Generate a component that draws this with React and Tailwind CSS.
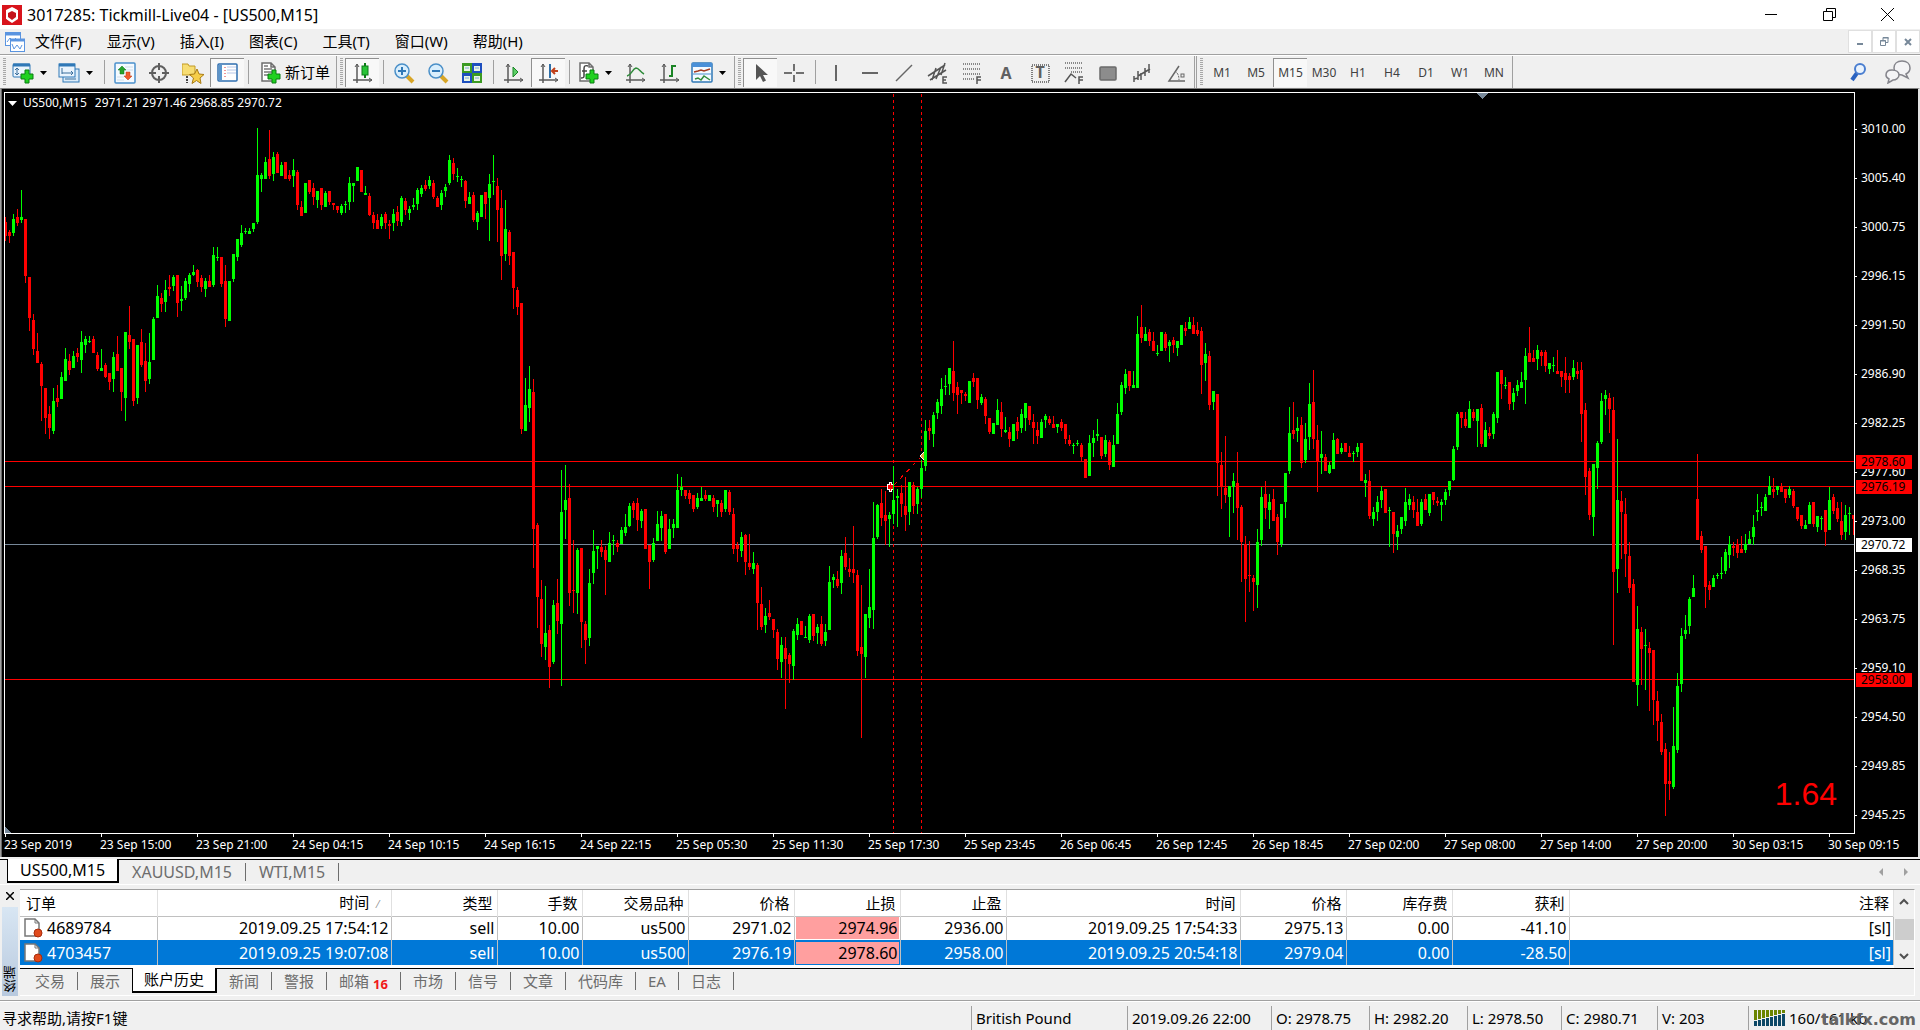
import React from "react";

const MENUS = ["文件(F)", "显示(V)", "插入(I)", "图表(C)", "工具(T)", "窗口(W)", "帮助(H)"];
const TIMEFRAMES = ["M1", "M5", "M15", "M30", "H1", "H4", "D1", "W1", "MN"];
const CHART_TABS = ["US500,M15", "XAUUSD,M15", "WTI,M15"];
const TERMINAL_TABS = [
  "交易", "展示", "账户历史", "新闻", "警报", "邮箱", "市场", "信号", "文章", "代码库", "EA", "日志",
];

const PRICES = [
  "3010.00", "3005.40", "3000.75", "2996.15", "2991.50", "2986.90", "2982.25", "2977.60",
  "2973.00", "2968.35", "2963.75", "2959.10", "2954.50", "2949.85", "2945.25",
];

const TIMES = [
  "23 Sep 2019", "23 Sep 15:00", "23 Sep 21:00", "24 Sep 04:15", "24 Sep 10:15",
  "24 Sep 16:15", "24 Sep 22:15", "25 Sep 05:30", "25 Sep 11:30", "25 Sep 17:30",
  "25 Sep 23:45", "26 Sep 06:45", "26 Sep 12:45", "26 Sep 18:45", "27 Sep 02:00",
  "27 Sep 08:00", "27 Sep 14:00", "27 Sep 20:00", "30 Sep 03:15", "30 Sep 09:15",
];

const LEVELS = [
  { y: 461, price: "2978.60", color: "#ff0000" },
  { y: 486, price: "2976.19", color: "#ff0000" },
  { y: 544, price: "2970.72", color: "#778899" },
  { y: 679, price: "2958.00", color: "#ff0000" },
];

const ORDERS = [
  ["4689784", "2019.09.25 17:54:12", "sell", "10.00", "us500", "2971.02", "2974.96", "2936.00", "2019.09.25 17:54:33", "2975.13", "0.00", "-41.10", "[sl]"],
  ["4703457", "2019.09.25 19:07:08", "sell", "10.00", "us500", "2976.19", "2978.60", "2958.00", "2019.09.25 20:54:18", "2979.04", "0.00", "-28.50", "[sl]"],
];
const COLUMNS = [
  ["订单", "w-[137px]"],
  ["时间", "w-[234px]"],
  ["类型", "w-[106px]"],
  ["手数", "w-[85px]"],
  ["交易品种", "w-[106px]"],
  ["价格", "w-[106px]"],
  ["止损", "w-[106px]"],
  ["止盈", "w-[106px]"],
  ["时间", "w-[234px]"],
  ["价格", "w-[106px]"],
  ["库存费", "w-[106px]"],
  ["获利", "w-[117px]"],
  ["注释", ""],
];

// direction, high, body top, body bottom, low
const BARS = `
d217,222,236,241 d230,232,236,243 u214,219,233,236 d209,217,223,226 u190,217,220,223
d219,219,276,283 d277,277,318,331 d314,320,349,355 d333,351,363,363 d362,364,386,421
d388,388,418,434 d406,414,428,439 u388,401,431,434 d385,398,402,407 u372,377,399,399
u348,359,381,381 d354,361,370,375 u351,356,368,368 d348,353,357,362 u331,342,360,373
u336,339,345,353 u336,341,342,343 d336,339,353,353 d352,355,369,371 u349,368,371,371
d363,365,377,378 d373,373,382,390 u352,357,379,392 d336,354,371,371 d368,368,392,411
u332,332,398,421 d306,335,342,349 d339,339,401,406 u345,345,398,404 d329,342,365,367
d343,361,381,392 u333,362,379,384 u317,319,360,360 u285,296,318,318 d293,298,304,312
u280,290,302,312 d275,287,289,296 u275,277,286,291 d275,275,303,317 u286,299,301,311
u278,281,298,300 u273,275,284,292 u265,272,275,276 d269,270,282,287 d275,278,287,292
u278,281,289,297 d275,281,287,287 u247,255,285,287 u247,257,258,261 d257,257,284,287
d265,281,319,327 u281,281,321,321 u254,254,279,282 u239,239,257,261 u225,233,245,247
u228,231,232,234 u228,231,234,234 u223,223,229,232 u128,175,222,224 u173,175,179,192
u157,162,179,179 d130,159,176,179 u152,157,174,181 d152,154,173,173 u162,165,176,176
d162,162,179,179 d170,175,179,181 u159,170,176,187 d170,172,205,210 d201,207,216,216
u183,183,213,213 d180,180,192,194 d183,188,197,205 u191,191,200,208 d188,188,205,210
u191,193,207,207 d191,191,202,205 d203,203,205,210 d206,206,210,213 u204,206,213,215
u201,204,205,213 u177,183,202,210 u183,183,186,202 u167,167,181,181 d170,170,192,192
u186,193,195,195 d193,196,215,216 d212,215,223,229 d214,220,229,229 u214,217,226,229
d212,214,223,229 d220,224,226,239 u209,214,223,231 d206,212,221,226 u196,198,222,226
d198,201,210,215 u206,209,213,220 u198,205,207,210 u188,190,204,210 u185,188,194,197
d180,185,189,191 u176,180,186,189 d180,183,197,199 d196,198,207,207 u190,193,205,210
u184,187,191,197 u155,160,183,185 d158,163,174,180 u168,176,177,182 u176,179,180,187
d180,181,201,208 u192,197,204,204 d192,195,220,222 u211,213,222,230 u195,195,217,217
d192,192,204,219 u174,184,198,241 u155,181,182,195 d178,186,210,242 d190,208,256,280
u200,229,254,261 d230,232,256,265 d252,252,288,309 d287,290,307,315 d303,303,429,434
u378,405,431,431 u366,389,408,422 d379,392,529,568 d523,525,597,628 d580,599,644,657
u586,633,647,660 d625,630,667,688 u600,605,662,664 d579,603,621,634 u470,512,624,686
u465,500,510,539 d484,498,593,606 d540,590,591,613 u548,550,593,614 d548,548,622,648
d621,624,640,664 u569,583,638,646 u530,551,573,584 u546,546,549,569 d540,547,552,557
d546,550,560,595 u532,543,562,562 u535,540,541,555 d540,543,547,552 u527,530,544,544
u514,527,533,536 u503,506,526,527 d501,503,510,518 d498,503,520,531 u509,511,521,528
d509,509,549,549 d545,545,562,589 u538,543,560,562 u511,524,541,541 u511,516,528,541
d514,514,552,554 u519,529,549,549 u519,524,528,538 u474,490,528,528 u477,487,490,496
d490,490,496,499 d490,493,499,504 d495,495,509,512 u493,498,507,509 u487,498,501,501
d490,495,499,501 u495,495,501,501 d495,498,507,512 u500,500,504,517 d500,503,512,517
u490,490,509,512 d490,492,512,515 d508,514,549,554 d542,545,549,562 u532,537,551,557
d534,535,562,575 d534,563,567,570 u552,563,569,574 d563,565,603,630 d587,604,627,630
u608,616,625,633 d600,613,617,620 d619,619,630,638 d629,632,659,670 u637,645,662,678
d637,648,659,709 d653,655,664,683 u629,631,666,680 u618,624,635,640 d621,621,635,635
u626,637,638,638 u614,616,640,643 d614,614,636,641 u624,627,633,644 d616,624,644,646
u624,632,641,646 u566,582,630,630 u574,577,580,588 d571,579,586,588 u550,556,583,594
d537,553,567,570 d558,569,572,577 d526,569,573,583 d570,575,651,656 d585,647,654,738
u614,614,657,678 u569,607,618,628 u502,538,610,629 u504,505,537,539 d489,503,518,526
d491,515,521,545 u512,515,519,547 u466,500,514,524 u489,496,498,527 d485,493,504,517
d477,506,515,531 u482,482,512,525 d482,485,506,514 u487,489,504,514 u460,468,489,498
u420,431,466,471 d420,428,431,440 u412,415,434,447 u399,402,413,419 u378,389,406,414
u375,386,387,395 u368,368,384,395 d341,371,393,401 d382,387,395,414 d390,390,393,404
d392,394,396,401 u381,381,403,403 d373,378,382,387 d378,378,400,409 u394,397,403,405
d397,399,416,424 d418,418,432,434 u423,423,434,434 u399,410,425,425 d402,412,429,437
u417,430,432,433 d427,432,439,447 u424,424,441,441 d417,422,431,439 u409,414,428,433
u403,403,418,431 d406,406,420,425 d414,422,428,444 d422,430,436,444 u419,422,438,438
u414,416,420,428 d416,419,423,425 d416,424,428,428 u424,424,427,433 d419,422,428,431
d424,424,439,444 d435,440,444,446 u443,445,446,454 u440,443,444,446 d443,445,457,461
d459,459,478,478 u435,443,476,476 u430,438,443,457 u419,434,436,441 d437,437,456,459
u435,440,454,457 d440,442,465,470 u435,445,467,467 u403,414,444,444 u382,385,412,415
u369,374,388,394 d371,371,386,391 u371,385,388,388 u316,334,388,388 d305,327,338,343
u327,334,341,341 d329,332,341,346 d332,341,351,351 u345,353,354,356 u332,332,351,351
d332,334,348,351 u340,342,346,362 d337,340,345,353 u341,341,348,356 u325,325,345,345
d322,328,331,336 u317,322,329,329 d317,325,334,334 d322,330,334,336 d327,331,365,394
u343,354,363,381 d351,356,405,410 u391,391,402,410 d394,394,463,496 d452,465,486,509
d436,488,495,503 u486,486,497,537 u473,481,487,513 d452,483,508,540 d505,507,542,582
d536,544,579,622 d541,575,576,592 d575,578,582,611 u529,542,585,608 u487,497,540,546
d481,494,508,519 u494,502,510,529 d489,499,521,521 d514,517,542,555 u504,504,544,547
u473,473,502,518 u407,433,471,474 d402,430,434,439 u417,428,431,442 d417,425,463,468
u423,439,460,463 u383,404,437,450 d370,402,439,449 d425,440,461,492 u431,454,458,474
d454,457,471,471 u462,465,473,474 u433,440,469,469 d438,439,454,454 u443,448,452,454
d443,443,452,452 d446,453,457,457 u451,453,454,462 u443,447,452,457 d443,443,481,481
u474,480,483,497 d470,481,516,519 u507,512,519,526 u496,502,512,521 u486,491,500,508
d489,489,513,513 u507,510,511,547 d512,512,534,553 u525,531,537,550 u517,517,529,534
u488,502,521,526 u494,499,505,510 d496,502,510,518 d499,512,526,526 u499,502,524,526
d494,499,510,510 u494,494,513,516 d492,492,500,505 d497,501,503,506 u499,502,505,521
u489,492,500,505 u481,481,490,496 u446,449,480,481 u412,414,447,450 d412,412,418,428
d412,419,426,428 u401,409,428,428 d409,412,418,421 u409,409,421,447 d404,408,444,447
u422,430,447,447 d427,433,436,439 u412,414,434,439 u372,372,418,423 d370,370,384,399
u377,385,386,389 d382,382,404,410 u388,393,402,410 u380,385,391,396 u372,382,388,388
u348,356,380,404 d327,353,362,362 d350,358,362,362 u345,350,359,370 d350,352,356,366
d350,352,366,372 u363,363,369,374 u357,365,366,372 d350,371,374,374 d371,371,377,387
d357,373,380,393 d373,376,380,393 u360,368,377,380 d362,371,374,379 d362,370,414,442
d403,410,477,495 d468,471,515,520 u464,464,517,536 u441,443,468,489 u393,401,442,444
u390,395,399,415 d393,398,409,433 d397,410,572,645 u439,500,569,593 d491,501,512,559
d498,514,554,577 d542,556,588,593 d579,584,682,682 u606,629,685,706 d627,632,649,685
u629,645,646,690 d642,648,653,711 d650,650,700,725 d691,701,721,741 d714,722,752,755
d743,749,784,816 d752,781,784,800 u707,746,787,789 u673,686,750,753 u628,636,684,692
u615,630,634,639 u597,599,626,634 u575,588,597,597 d454,499,540,540 d531,536,550,553
d546,546,587,608 d581,585,590,600 u575,578,587,587 u573,575,576,579 u557,573,574,579
u549,552,571,574 u536,544,555,568 d542,546,548,556 d539,544,553,558 d536,549,553,553
u534,544,550,553 u531,539,544,544 u515,527,537,545 u494,510,512,521 u502,507,508,516
u494,497,511,511 u476,486,495,495 d478,489,492,498 u486,486,490,495 d483,486,492,492
d489,489,498,503 u486,489,495,498 d489,491,506,508 d507,507,519,521 d515,515,526,529
u520,525,529,529 u502,505,524,524 d502,502,524,527 u516,516,527,532 u516,518,519,530
d510,510,532,546 u487,500,530,530 d494,497,511,514 d502,508,519,522 d502,521,535,540
u505,515,532,540 u507,513,514,535 d515,515,519,535
`
  .trim()
  .split(/\s+/)
  .map((token) => {
    const [high, top, bottom, low] = token.slice(1).split(",").map(Number);
    return { up: token[0] === "u", high, top, bottom, low };
  });

const PLOT_X = 5;
const PLOT_Y = 93;

function Icon({ children, size = 22 }) {
  return (
    <svg width={size} height={size} viewBox="0 0 22 22" fill="none" aria-hidden="true" className="shrink-0">
      {children}
    </svg>
  );
}

const Plus = () => <path d="M13 8h4v4h4v5h-4v4h-4v-4H9v-5h4z" fill="#1fd11f" stroke="#0a7d12" />;

const Axes = () => (
  <g stroke="#5a5a5a">
    <path d="M5 2v19M1 18h19" strokeWidth="1.500" />
    <path d="M3 5l2-3 2 3M17 16l3 2-3 2" />
  </g>
);

const Page = () => <path d="M3 1h9l4 4v14H3z M12 1v4h4" fill="#fff" stroke="#6e6e6e" strokeWidth="1.500" />;

const ICONS = {
  newChart: (
    <>
      <rect x="1" y="2" width="17" height="13" rx="1" fill="#eaf4fd" stroke="#2f78b7" />
      <path d="M1 3h17" stroke="#2f78b7" strokeWidth="3" />
      <path d="M5 6v7M3 8l2-2 2 2M3 11l2 2 2-2" stroke="#3b6f9c" />
      <Plus />
    </>
  ),
  profiles: (
    <>
      <rect x="5" y="7" width="16" height="13" fill="#dcecf9" stroke="#2f78b7" />
      <rect x="1" y="2" width="16" height="13" fill="#eaf4fd" stroke="#2f78b7" />
      <path d="M1 3h16" stroke="#2f78b7" strokeWidth="3" />
      <path d="M4 6v6M4 11h11M13 9l2 2-2 2M7 17h11" stroke="#3b6f9c" />
    </>
  ),
  market: (
    <>
      <rect x="1" y="1" width="20" height="20" rx="1" fill="#f4faff" stroke="#4a90cc" strokeWidth="1.500" />
      <path d="M11 5h8M11 8h8M3 15h7M3 18h7" stroke="#cfdde8" />
      <path d="M8 4l4 4h-2v4H6V8H4z" fill="#25a32b" stroke="#127018" strokeWidth=".5" />
      <path d="M12 10h4v4h2l-4 4-4-4h2z" fill="#f1592a" stroke="#b8360f" strokeWidth=".5" />
    </>
  ),
  target: (
    <g stroke="#5f5f5f" strokeWidth="2">
      <circle cx="11" cy="11" r="7" />
      <path d="M11 1v7M11 14v7M1 11h7M14 11h7" />
    </g>
  ),
  favorites: (
    <>
      <path d="M0 2h6l1 2h6v9H0z" fill="#f7dd73" stroke="#c29a25" />
      <path d="M5 14v7" stroke="#444" strokeWidth="2" strokeDasharray="2 1" />
      <path d="M15 7l2 5 5 .5-4 3.500 1 5.500-4.500-3-4.500 3 1.500-5.500-4-3.500 5-.5z" fill="#f6ce4a" stroke="#a97c14" />
    </>
  ),
  navigator: (
    <>
      <rect x="1" y="2" width="19" height="17" rx="1" fill="#fff" stroke="#2f6fb0" strokeWidth="1.500" />
      <rect x="2" y="3" width="3" height="15" fill="#5a96cc" />
      <path d="M8 5v11" stroke="#e03030" strokeDasharray="1 2" />
      <path d="M10 5h9M10 8h9M10 11h9" stroke="#b8c8e8" />
    </>
  ),
  newOrder: (
    <>
      <Page />
      <path d="M5 7h8M5 10h8M5 13h5M5 4h4" stroke="#7a7a7a" strokeWidth="1.500" />
      <Plus />
    </>
  ),
  candles: (
    <>
      <Axes />
      <path d="M13 1v15" stroke="#0d7a18" strokeWidth="2" />
      <rect x="10" y="4" width="6" height="9" fill="#28c436" stroke="#0d7a18" />
    </>
  ),
  zoomIn: (
    <>
      <path d="M13 13l7 7" stroke="#d8a526" strokeWidth="4" />
      <circle cx="9" cy="9" r="7" fill="#d9eefc" stroke="#4a8fc8" strokeWidth="1.500" />
      <path d="M9 5v8M5 9h8" stroke="#2f78b7" strokeWidth="2" />
    </>
  ),
  zoomOut: (
    <>
      <path d="M13 13l7 7" stroke="#d8a526" strokeWidth="4" />
      <circle cx="9" cy="9" r="7" fill="#d9eefc" stroke="#4a8fc8" strokeWidth="1.500" />
      <path d="M5 9h8" stroke="#2f78b7" strokeWidth="2" />
    </>
  ),
  tile: (
    <>
      <rect x="1" y="1" width="10" height="10" fill="#3b9a22" />
      <rect x="11" y="1" width="10" height="10" fill="#1d4fbf" />
      <rect x="1" y="11" width="10" height="10" fill="#1d4fbf" />
      <rect x="11" y="11" width="10" height="10" fill="#3b9a22" />
      <path d="M3 4h6v5H3zM13 4h6v5h-6zM3 14h6v5H3zM13 14h6v5h-6z" fill="#e9f5e4" />
      <path d="M4 6h4M14 6h4M4 16h4M14 16h4" stroke="#7fa8d8" />
    </>
  ),
  autoScroll: (
    <>
      <Axes />
      <path d="M10 5l5 5-5 5z" fill="#5cd066" stroke="#1b8426" />
    </>
  ),
  shift: (
    <>
      <Axes />
      <path d="M12 2v14" stroke="#2f6fa8" strokeWidth="2" />
      <path d="M20 9h-6M17 6l-3 3 3 3" stroke="#c0401a" strokeWidth="2" />
    </>
  ),
  indicators: (
    <>
      <Page />
      <path d="M11 4c-3-1-4 0-4 3v7c0 2-1 2-3 2M5 9h5" stroke="#444" strokeWidth="1.500" />
      <Plus />
    </>
  ),
  periods: (
    <>
      <Axes />
      <path d="M2 14c5-1 5-7 9-8 3 0 4 4 8 6" stroke="#2f8b3a" strokeWidth="1.500" />
    </>
  ),
  barChart: (
    <>
      <Axes />
      <path d="M13 3v12M13 4h4M10 14h3" stroke="#1b8426" strokeWidth="2" />
    </>
  ),
  template: (
    <>
      <rect x="1" y="1" width="20" height="19" rx="1" fill="#f4faff" stroke="#2f78b7" strokeWidth="1.500" />
      <path d="M1 3h20" stroke="#4a90d8" strokeWidth="4" />
      <path d="M2 12h18" stroke="#4a90cc" />
      <path d="M3 10l4-1 3-1 3 1 6-2" stroke="#a33a20" strokeWidth="1.500" />
      <path d="M4 17l3-1 3 2 3-4 3 2 3 2" stroke="#2f8b3a" strokeWidth="1.500" />
    </>
  ),
  cursor: <path d="M6 2v16l4-4 3 6 3-1.500-3-5.500h5z" fill="#555" />,
  crosshair: <path d="M11 2v7M11 13v7M1 11h8M13 11h8" stroke="#707070" strokeWidth="2" />,
  vline: <path d="M11 3v16" stroke="#666" strokeWidth="2" />,
  hline: <path d="M3 11h16" stroke="#666" strokeWidth="2" />,
  trend: <path d="M3 19L19 3" stroke="#666" strokeWidth="1.500" />,
  channel: (
    <>
      <path d="M1 14L18 3M3 18L19 8M5 18L9 6M9 17l5-12M14 13l4-12" stroke="#555" strokeWidth="1.500" />
      <path d="M20 15h-4v6h4M16 18h3" stroke="#555" strokeWidth="1.500" />
    </>
  ),
  fibo: (
    <>
      <path d="M2 2h18M2 7h18M2 12h18M2 17h11" stroke="#666" strokeWidth="1.500" strokeDasharray="1 1" />
      <path d="M20 15h-4v7M16 18h4" stroke="#555" strokeWidth="1.500" />
    </>
  ),
  label: <rect x="3" y="3" width="17" height="17" stroke="#555" strokeWidth="1.500" strokeDasharray="1 1" />,
  fiboArrow: (
    <>
      <path d="M2 1h18M2 6h18M8 10h12" stroke="#666" strokeWidth="1.500" strokeDasharray="1 1" />
      <path d="M2 20l6-8 5 4" stroke="#555" strokeWidth="1.500" />
      <path d="M20 15h-4v7M16 18h4" stroke="#555" strokeWidth="1.500" />
    </>
  ),
  rectangle: <rect x="3" y="5" width="16" height="13" rx="1" fill="#8c8c8c" stroke="#6a6a6a" strokeWidth="1.500" />,
  pitchfork: <path d="M3 14v6M3 17l4-1M7 9v9M10 11v7M7 14l12-7M14 6v8M18 2v9" stroke="#555" strokeWidth="1.500" />,
  angle: (
    <>
      <path d="M14 4L4 19h16" stroke="#666" strokeWidth="1.500" />
      <path d="M10 9c3 2 4 5 4 9" stroke="#666" strokeDasharray="2 1" />
      <rect x="16" y="12" width="3" height="3" stroke="#666" />
    </>
  ),
};

function Separator() {
  return (
    <div className="flex w-2 justify-center py-0.5">
      <div className="w-px bg-[#a0a0a0]" />
    </div>
  );
}

function Caret() {
  return (
    <svg width="7" height="4" className="shrink-0" aria-hidden="true">
      <path d="M0 0h7L3.500 4z" fill="#000" />
    </svg>
  );
}

function ToolButton({ icon, pressed, children }) {
  return (
    <button
      aria-label={icon}
      className={`flex h-[29px] w-[34px] items-center justify-center text-xs text-[#404040] ${
        pressed ? "border-t border-l border-[#909090] bg-[#f8f8f8]" : ""
      }`}
    >
      {icon && <Icon>{ICONS[icon]}</Icon>}
      {children}
    </button>
  );
}

function SplitButton({ icon }) {
  return (
    <button aria-label={icon} className="flex h-[29px] w-[46px] items-center gap-1.5 pl-1">
      <Icon>{ICONS[icon]}</Icon>
      <Caret />
    </button>
  );
}

function ToolGroup({ children }) {
  return (
    <div className="flex items-stretch border-r border-[#a0a0a0] py-0.5 pr-px">
      <div className="flex w-2 justify-center">
        <div className="w-[3px] bg-[repeating-linear-gradient(#a8a8a8_0_1px,#efefef_1px_2px)]" />
      </div>
      {children}
    </div>
  );
}

function TitleBar() {
  return (
    <header className="flex h-[29px] items-center bg-white pl-0.5">
      <svg width="20" height="20" viewBox="0 0 20 20" aria-hidden="true">
        <rect width="20" height="20" fill="#d8141c" />
        <path d="M10 2l6 3v9l-6 4-6-4V5z" fill="#fff" />
        <path d="M10 6l4 2v4l-4 3-4-3V8z" fill="#c4141c" />
        <path d="M13 3l4-1v4zM3 13v5l4-1z" fill="#d8141c" />
      </svg>
      <h1 className="ml-[5px] text-base">3017285: Tickmill-Live04 - [US500,M15]</h1>
      <div className="ml-auto flex pr-1">
        <button aria-label="minimize" className="flex h-7 w-[58px] items-center justify-center">
          <svg width="12" height="12"><path d="M0 5.500h12" stroke="#000" /></svg>
        </button>
        <button aria-label="restore" className="flex h-7 w-[58px] items-center justify-center">
          <svg width="13" height="13" fill="none" stroke="#000">
            <path d="M.5 3.500h9v9h-9zM3.500 3V.5h9v9H10" />
          </svg>
        </button>
        <button aria-label="close" className="flex h-7 w-[58px] items-center justify-center">
          <svg width="13" height="13"><path d="M0 0l13 13M13 0L0 13" stroke="#000" /></svg>
        </button>
      </div>
    </header>
  );
}

function MenuBar() {
  return (
    <nav className="flex h-[26px] items-center border-b border-[#a0a0a0]">
      <svg width="20" height="20" viewBox="0 0 20 20" fill="none" className="mr-2.5 ml-[5px]" aria-hidden="true">
        <rect x=".5" y=".5" width="15" height="13" fill="#fff" stroke="#5a94e0" />
        <path d="M0 2h16" stroke="#5a94e0" strokeWidth="3" />
        <path d="M2 10l3-4 3 3 3-3" stroke="#5a94e0" />
        <rect x="5.500" y="7.500" width="14" height="12" fill="#fff" stroke="#5a94e0" />
        <path d="M5 8h15" stroke="#5a94e0" strokeWidth="3" />
        <path d="M7 12l2 5 3-4 3 4 2-4" stroke="#5a94e0" />
      </svg>
      <div className="flex gap-[25px]">
        {MENUS.map((m) => (
          <button key={m} className="h-6 text-[15px]">
            {m}
          </button>
        ))}
      </div>
      <div className="ml-auto flex">
        <button aria-label="minimize chart" className="flex h-[23px] w-6 items-center justify-center border border-[#e0e0e0] bg-white">
          <svg width="8" height="8"><path d="M1 6h6" stroke="#778899" strokeWidth="2" /></svg>
        </button>
        <button aria-label="restore chart" className="flex h-[23px] w-6 items-center justify-center border border-[#e0e0e0] bg-white">
          <svg width="9" height="9" fill="none" stroke="#778899">
            <path d="M.5 3.500h5v5h-5zM3 3V.5h5v5H6M0 4h6M3 1h6" />
          </svg>
        </button>
        <button aria-label="close chart" className="flex h-[23px] w-6 items-center justify-center border border-[#e0e0e0] bg-white">
          <svg width="8" height="8"><path d="M1 1l6 6M7 1L1 7" stroke="#778899" strokeWidth="2" /></svg>
        </button>
      </div>
    </nav>
  );
}

function Toolbar() {
  return (
    <div className="flex h-[33px] border-t border-white">
      <ToolGroup>
        <SplitButton icon="newChart" />
        <SplitButton icon="profiles" />
        <Separator />
        <ToolButton icon="market" />
        <ToolButton icon="target" />
        <ToolButton icon="favorites" />
        <ToolButton icon="navigator" pressed />
        <Separator />
        <button className="flex h-[29px] w-[83px] items-center gap-1 pl-[7px] text-[15px] whitespace-nowrap">
          <Icon>{ICONS.newOrder}</Icon>
          新订单
        </button>
      </ToolGroup>
      <ToolGroup>
        <ToolButton icon="candles" pressed />
        <Separator />
        <ToolButton icon="zoomIn" />
        <ToolButton icon="zoomOut" />
        <ToolButton icon="tile" />
        <Separator />
        <ToolButton icon="autoScroll" />
        <ToolButton icon="shift" pressed />
        <Separator />
        <SplitButton icon="indicators" />
        <ToolButton icon="periods" />
        <ToolButton icon="barChart" />
        <SplitButton icon="template" />
      </ToolGroup>
      <ToolGroup>
        <ToolButton icon="cursor" pressed />
        <ToolButton icon="crosshair" />
        <Separator />
        <ToolButton icon="vline" />
        <ToolButton icon="hline" />
        <ToolButton icon="trend" />
        <ToolButton icon="channel" />
        <ToolButton icon="fibo" />
        <ToolButton>
          <span className="text-base font-bold text-[#606060]">A</span>
        </ToolButton>
        <button className="relative flex h-[29px] w-[34px] items-center justify-center">
          <Icon>{ICONS.label}</Icon>
          <span className="absolute inset-0 text-center text-base leading-[29px] font-bold text-[#606060]">T</span>
        </button>
        <ToolButton icon="fiboArrow" />
        <ToolButton icon="rectangle" />
        <ToolButton icon="pitchfork" />
        <ToolButton icon="angle" />
      </ToolGroup>
      <div className="w-0.5 border-r border-[#a0a0a0]" />
      <ToolGroup>
        {TIMEFRAMES.map((t) => (
          <ToolButton key={t} pressed={t === "M15"}>
            {t}
          </ToolButton>
        ))}
      </ToolGroup>
      <div className="ml-auto flex items-center gap-3.5 pr-2">
        <button aria-label="search">
          <Icon>
            <path d="M9 12l-5 7" stroke="#2a62c0" strokeWidth="4" />
            <circle cx="12" cy="8" r="5" fill="#eaf3fd" stroke="#4a7ed0" strokeWidth="2" />
          </Icon>
        </button>
        <button aria-label="community">
          <svg width="28" height="24" viewBox="0 0 28 24" fill="#f4f4f6" stroke="#85858c" strokeWidth="1.500">
            <path d="M18 1c5 0 8 3 8 7s-2 5-4 6l2 4-6-3c-5 0-8-3-8-7s3-7 8-7z" />
            <path d="M8 10c4 0 7 2 7 5s-3 5-6 5l-5 3 1-4c-2-1-3-2-3-4 0-3 2-5 6-5z" />
          </svg>
        </button>
      </div>
    </div>
  );
}

function Candle({ bar, index }) {
  const x = PLOT_X + index * 4;
  return (
    <g fill={bar.up ? "#00ff00" : "#ff0000"}>
      <rect x={x} y={bar.high} width="1" height={Math.max(1, bar.low - bar.high)} />
      <rect x={x - 1} y={bar.top} width="3" height={Math.max(1, bar.bottom - bar.top)} />
    </g>
  );
}

function Plot() {
  return (
    <div className="relative min-w-0 flex-1 border border-white">
      <svg className="absolute inset-0 h-full w-full" shapeRendering="crispEdges" role="img" aria-label="US500 M15">
        <g transform={`translate(${-PLOT_X} ${-PLOT_Y})`}>
          {LEVELS.map((l) => (
            <rect key={l.y} x={PLOT_X} y={l.y} width="100%" height="1" fill={l.color} />
          ))}
          <path d="M893.5 94V834M921.5 94V834" stroke="#ff0000" strokeDasharray="3 3" />
          <path d="M894 485L920 458" stroke="#ff0000" strokeDasharray="4 5" />
          <path d="M889 482h2v2h2v5h-2v2h-2v-2h-2v-5h2z" fill="#ff0000" stroke="#fff" />
          <path d="M924 452l-4 4 4 4z" fill="#e8a040" stroke="#fff" />
          {BARS.map((bar, i) => (
            <Candle key={i} bar={bar} index={i} />
          ))}
          <path d="M1476 93h12l-6 6z" fill="#778899" />
          <path d="M5 826v7h6z" fill="#778899" />
        </g>
      </svg>
      <div className="relative flex items-center gap-1.5 pl-[3px] text-xs leading-5 text-white">
        <svg width="9" height="5" aria-hidden="true">
          <path d="M0 0h9L4.500 5z" fill="#fff" />
        </svg>
        <span className="flex gap-2">
          <span>US500,M15</span>
          <span>2971.21 2971.46 2968.85 2970.72</span>
        </span>
      </div>
      <div className="absolute right-[17px] bottom-[23px] font-['Liberation_Sans',sans-serif] text-[32px] leading-8 text-[#ff0000]">
        1.64
      </div>
    </div>
  );
}

function PriceAxis() {
  return (
    <div className="relative flex w-[63px] flex-col justify-between pt-[29px] pb-[11px] text-xs leading-4 text-white">
      {PRICES.map((p) => (
        <div key={p} className="flex h-4 items-center gap-1">
          <span className="h-px w-0.5 bg-white" />
          {p}
        </div>
      ))}
      {LEVELS.map((l) => (
        <div
          key={l.price}
          style={{ top: l.y - 98 }}
          className={`absolute left-px h-3.5 w-14 pl-[5px] leading-[14px] text-black ${
            l.color === "#ff0000" ? "bg-[#ff0000]" : "bg-white"
          }`}
        >
          {l.price}
        </div>
      ))}
    </div>
  );
}

function ChartWindow() {
  return (
    <main className="flex flex-1 flex-col border-t border-r-2 border-l border-t-[#808080] border-r-[#e3e3e3] border-l-[#a0a0a0] bg-black">
      <div className="flex flex-1 flex-col border-l border-[#696969] pt-[3px] pl-0.5">
        <div className="flex flex-1">
          <Plot />
          <PriceAxis />
        </div>
        <div className="flex h-[23px] overflow-hidden text-xs leading-4 text-white">
          {TIMES.map((t) => (
            <div key={t} className="w-24 shrink-0 whitespace-nowrap">
              <div className="ml-px h-[3px] w-px bg-white" />
              {t}
            </div>
          ))}
        </div>
      </div>
    </main>
  );
}

function ChartTabs() {
  return (
    <div className="mt-0.5 flex h-[26px] items-start border-t border-b border-t-black border-b-white pl-[7px] text-base text-[#6d6d6d]">
      {CHART_TABS.map((t, i) =>
        i === 0 ? (
          <button key={t} className="-mt-px h-6 border-r-2 border-b-2 border-l border-black bg-white px-3 leading-5 text-black">
            {t}
          </button>
        ) : (
          <button key={t} className="my-[3px] h-[18px] border-r border-[#6d6d6d] px-[13px] leading-4">
            {t}
          </button>
        )
      )}
      <div className="ml-auto flex gap-4 self-center pr-2.5">
        <button aria-label="scroll left">
          <svg width="8" height="8"><path d="M5 0v8L1 4z" fill="#a0a0a0" /></svg>
        </button>
        <button aria-label="scroll right">
          <svg width="8" height="8"><path d="M2 0v8l4-4z" fill="#a0a0a0" /></svg>
        </button>
      </div>
    </div>
  );
}

function OrderIcon() {
  return (
    <svg width="20" height="20" viewBox="0 0 20 20" aria-hidden="true">
      <path d="M2 1h10l4 4v13H2z" fill="#fff" stroke="#777" strokeWidth="1.500" />
      <path d="M12 1v4h4" fill="none" stroke="#777" />
      <circle cx="15" cy="15" r="4" fill="#e04a1c" stroke="#a82c0c" />
    </svg>
  );
}

function HistoryTable() {
  return (
    <table className="min-w-0 flex-1 table-fixed border-collapse text-right text-[15px]">
      <thead>
        <tr className="h-[26px] border-b border-[#c0c0c0]">
          {COLUMNS.map(([name, width], i) => (
            <th
              key={i}
              className={`border-r border-[#e0e0e0] p-0 leading-5 font-normal ${width} ${
                i === 0 ? "pl-1.5 text-left" : "pr-1"
              }`}
            >
              {name}
              {i === 1 && <span className="mx-2 inline-block text-[10px] text-[#888]">⁄</span>}
            </th>
          ))}
        </tr>
      </thead>
      <tbody className="text-base">
        {ORDERS.map((row, r) => (
          <tr key={row[0]} className={r === 1 ? "h-[25px] bg-[#0078d7] text-white" : "h-6"}>
            {row.map((cell, i) => (
              <td
                key={i}
                className={`border-r border-[#c0c0c0] p-0 leading-5 ${i === 0 ? "text-left" : ""} ${
                  i === 6 ? "text-black" : "pr-0.5"
                }`}
              >
                {i === 0 && (
                  <span className="flex items-center gap-1 pl-[3px]">
                    <OrderIcon />
                    {cell}
                  </span>
                )}
                {i === 6 && <span className="mx-px block bg-[#ff9f9f] py-px pr-px">{cell}</span>}
                {i !== 0 && i !== 6 && cell}
              </td>
            ))}
          </tr>
        ))}
      </tbody>
    </table>
  );
}

function Terminal() {
  return (
    <section className="mt-1 flex h-[107px] pr-[5px]">
      <div className="flex w-5 flex-col items-center">
        <button aria-label="close terminal" className="flex h-[18px] w-4 items-start justify-center pt-[3px]">
          <svg width="8" height="8"><path d="M0 0l8 8M8 0L0 8" stroke="#000" strokeWidth="1.500" /></svg>
        </button>
        <div className="flex w-4 flex-1 rotate-180 items-center justify-start bg-linear-to-t from-[#d8e6f3] to-[#b8c9de] pt-1 text-[13px] leading-4 [writing-mode:vertical-rl]">
          终端
        </div>
      </div>
      <div className="flex min-w-0 flex-1 flex-col border-t border-r border-b border-t-[#a0a0a0] border-r-white border-b-white">
        <div className="flex h-[79px] items-start border-b border-black bg-white">
          <HistoryTable />
          <div className="flex h-full w-5 flex-col items-center justify-between bg-[#f0f0f0] py-2">
            <button aria-label="scroll up">
              <svg width="10" height="7" fill="none"><path d="M1 6l4-4 4 4" stroke="#505050" strokeWidth="2" /></svg>
            </button>
            <div className="h-[21px] w-[19px] bg-[#cdcdcd]" />
            <button aria-label="scroll down">
              <svg width="10" height="7" fill="none"><path d="M1 1l4 4 4-4" stroke="#505050" strokeWidth="2" /></svg>
            </button>
          </div>
        </div>
        <div className="flex items-start pl-[3px] text-[15px] text-[#6d6d6d]">
          {TERMINAL_TABS.map((t) => {
            if (t === "账户历史") {
              return (
                <button key={t} className="-mt-px h-[25px] border-r-2 border-b-2 border-l border-black bg-white px-[11px] text-black">
                  {t}
                </button>
              );
            }
            const border = t === "展示" ? "" : "border-r border-[#6d6d6d]";
            return (
              <button key={t} className={`my-[3px] flex h-[18px] items-center px-3 leading-4 ${border}`}>
                {t}
                {t === "邮箱" && (
                  <span className="mt-1.5 ml-1 text-[13px] leading-3 font-bold text-[#f01818]">16</span>
                )}
              </button>
            );
          })}
        </div>
      </div>
    </section>
  );
}

function StatusBar() {
  return (
    <footer className="mt-1 flex h-[30px] items-center border-t border-[#a0a0a0] pt-1 text-[15px] leading-6 shadow-[inset_0_1px_0_#fff]">
      <span className="flex-1 pl-0.5">寻求帮助,请按F1键</span>
      <span className="h-6 w-[156px] border-l border-[#a0a0a0] pl-1">British Pound</span>
      <span className="h-6 w-36 border-l border-[#a0a0a0] pl-1 whitespace-nowrap">2019.09.26 22:00</span>
      <span className="h-6 w-[98px] border-l border-[#a0a0a0] pl-1">O: 2978.75</span>
      <span className="h-6 w-[98px] border-l border-[#a0a0a0] pl-1">H: 2982.20</span>
      <span className="h-6 w-[94px] border-l border-[#a0a0a0] pl-1">L: 2978.50</span>
      <span className="h-6 w-24 border-l border-[#a0a0a0] pl-1">C: 2980.71</span>
      <span className="h-6 w-[91px] border-l border-[#a0a0a0] pl-1">V: 203</span>
      <span className="relative flex h-6 w-[172px] items-center gap-1 border-l border-[#a0a0a0] pl-[5px]">
        <svg width="31" height="16" shapeRendering="crispEdges" aria-hidden="true">
          {[0, 1, 2, 3, 4, 5, 6, 7].map((i) => (
            <g key={i}>
              <rect x={i * 4} y="0" width="3" height={10 - i} fill="#6b8500" />
              <rect x={i * 4} y={11 - i} width="3" height={5 + i} fill="#0d4866" />
            </g>
          ))}
        </svg>
        160/161 kb
        <span className="absolute right-1 bottom-0.5 font-['DejaVu_Sans',sans-serif] text-base leading-4 font-bold text-[#666]">
          talkfx.com
        </span>
      </span>
    </footer>
  );
}

export default function App() {
  return (
    <div className="flex min-h-screen flex-col overflow-hidden bg-[#f0f0f0] font-['Noto_Sans','Noto_Sans_CJK_SC',sans-serif] text-black">
      <TitleBar />
      <MenuBar />
      <Toolbar />
      <ChartWindow />
      <ChartTabs />
      <Terminal />
      <StatusBar />
    </div>
  );
}
